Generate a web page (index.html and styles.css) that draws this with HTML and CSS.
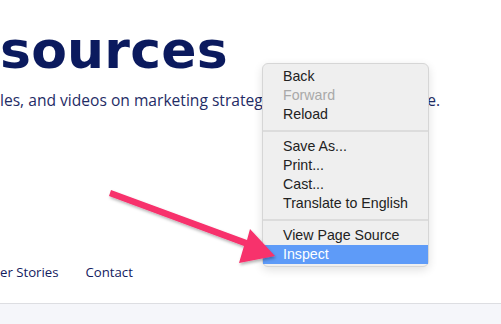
FILE: index.html
```html
<!DOCTYPE html>
<html lang="en">
<head>
    <meta charset="UTF-8">
    <meta name="viewport" content="width=device-width, initial-scale=1.0">
    <title>Resources</title>
    <link rel="stylesheet" href="styles.css">
</head>
<body>

    <div class="page">
        <header class="hero">
            <h1 class="title">sources</h1>
            <p class="lead">les, and videos on marketing strategy, all in one handy place.</p>
        </header>

        <nav class="nav">
            <a href="#">er Stories</a>
            <a href="#">Contact</a>
        </nav>

        <div class="strip"></div>
    </div>

    <!-- browser context menu -->
    <ul class="menu">
        <li>Back</li>
        <li class="off">Forward</li>
        <li>Reload</li>
        <li class="sep"></li>
        <li>Save As...</li>
        <li>Print...</li>
        <li>Cast...</li>
        <li>Translate to English</li>
        <li class="sep"></li>
        <li>View Page Source</li>
        <li class="on">Inspect</li>
    </ul>

    <!-- annotation arrow -->
    <svg class="arrow" width="501" height="324" viewBox="0 0 501 324">
        <defs>
            <filter id="shadow" x="-20%" y="-20%" width="140%" height="140%">
                <feDropShadow dx="1" dy="2" stdDeviation="1.5" flood-color="#000" flood-opacity="0.3"/>
            </filter>
        </defs>
        <g filter="url(#shadow)" fill="#f7306c">
            <path d="M109 196 L111 190 L247 240 L250 229 L275 256 L239 263 L244 246 Z"/>
        </g>
    </svg>

</body>
</html>
```

FILE: styles.css
```css
* {
    box-sizing: border-box;
    margin: 0;
    padding: 0;
}
body {
    font-family: 'Inter', sans-serif;
    background: #ffffff;
    color: #0c1a5c;
    width: 501px;
    height: 324px;
    overflow: hidden;
    position: relative;
}
.page {
    display: flex;
    flex-direction: column;
    height: 100%;
}
.hero {
    padding-top: 20px;
}
.title {
    font-family: 'DejaVu Sans', sans-serif;
    font-size: 52px;
    font-weight: 700;
    letter-spacing: 0.2px;
    line-height: 60px;
    color: #0b1a5e;
}
.lead {
    margin-top: 8px;
    font-family: 'Open Sans', sans-serif;
    font-size: 15.6px;
    line-height: 24px;
    color: #1f2c66;
    white-space: nowrap;
}
.nav {
    display: flex;
    gap: 27px;
    margin-top: 151px;
}
.nav a {
    font-family: 'Open Sans', sans-serif;
    font-size: 13.2px;
    color: #13205e;
    text-decoration: none;
}
.strip {
    margin-top: 22px;
    flex: 1;
    border-top: 1px solid #dddee2;
    background: #f5f6fa;
}

/* Context menu */
.menu {
    position: absolute;
    left: 262px;
    top: 63px;
    width: 167px;
    list-style: none;
    background: #efefef;
    border: 1px solid #d6d6d6;
    border-radius: 6px;
    padding: 3px 0 2px;
    box-shadow: 0 3px 10px rgba(0, 0, 0, 0.12);
    font-family: 'Liberation Sans', sans-serif;
    font-size: 14.2px;
    color: #222;
}
.menu li {
    height: 19px;
    line-height: 19px;
    padding-left: 20px;
}
.menu .off {
    color: #a9a9a9;
}
.menu .on {
    background: #5e9bf8;
    color: #fff;
}
.menu .sep {
    height: 2px;
    margin: 6px 0 5px;
    background: #dcdcdc;
}
.arrow {
    position: absolute;
    left: 0;
    top: 0;
}
```
